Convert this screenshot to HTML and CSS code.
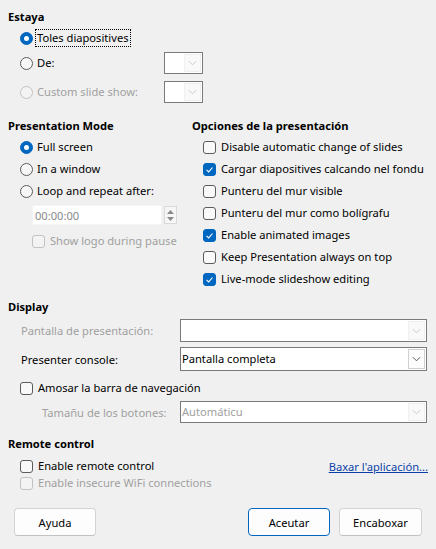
FILE: index.html
```html
<!DOCTYPE html>
<html lang="ast">
<head>
<meta charset="utf-8">
<title>Presentación</title>
<link rel="stylesheet" href="styles.css">
</head>
<body>
<div class="dialog">
  <section class="sec-estaya">
    <h2 class="heading">Estaya</h2>
    <div class="estaya-rows">
      <div class="row r16">
        <span class="radio checked"></span><span class="lbl focus">Toles diapositives</span>
      </div>
      <div class="row r22">
        <span class="radio"></span><span class="lbl wlab">De:</span>
        <span class="combo small"><span class="combo-field"></span><span class="combo-btn dim"><svg viewBox="0 0 10 6" width="9" height="6"><path d="M1 1l4 4 4-4" fill="none" stroke="currentColor" stroke-width="1"/></svg></span></span>
      </div>
      <div class="row r22 disabled">
        <span class="radio"></span><span class="lbl wlab">Custom slide show:</span>
        <span class="combo small"><span class="combo-field"></span><span class="combo-btn dim"><svg viewBox="0 0 10 6" width="9" height="6"><path d="M1 1l4 4 4-4" fill="none" stroke="currentColor" stroke-width="1"/></svg></span></span>
      </div>
    </div>
  </section>

  <div class="two-col">
    <section class="col-left">
      <h2 class="heading">Presentation Mode</h2>
      <div class="list">
        <div class="row r16"><span class="radio checked"></span><span class="lbl">Full screen</span></div>
        <div class="row r16"><span class="radio"></span><span class="lbl">In a window</span></div>
        <div class="row r16"><span class="radio"></span><span class="lbl">Loop and repeat after:</span></div>
        <div class="spin">
          <span class="spin-field">00:00:00</span>
          <span class="spin-btns">
            <svg viewBox="0 0 7 4" width="7" height="4"><path d="M0 4L3.5 0 7 4z" fill="currentColor"/></svg>
            <svg viewBox="0 0 7 4" width="7" height="4"><path d="M0 0L3.5 4 7 0z" fill="currentColor"/></svg>
          </span>
        </div>
        <div class="row r16 disabled logo-row"><span class="check"></span><span class="lbl">Show logo during pause</span></div>
      </div>
    </section>
    <section class="col-right">
      <h2 class="heading">Opciones de la presentación</h2>
      <div class="list">
        <div class="row r16"><span class="check"></span><span class="lbl">Disable automatic change of slides</span></div>
        <div class="row r16"><span class="check checked"><svg viewBox="0 0 13 13" width="13" height="13"><path d="M3.5 6.8l2.2 2.1 3.8-4.4" fill="none" stroke="#fff" stroke-width="1.1"/></svg></span><span class="lbl">Cargar diapositives calcando nel fondu</span></div>
        <div class="row r16"><span class="check"></span><span class="lbl">Punteru del mur visible</span></div>
        <div class="row r16"><span class="check"></span><span class="lbl">Punteru del mur como bolígrafu</span></div>
        <div class="row r16"><span class="check checked"><svg viewBox="0 0 13 13" width="13" height="13"><path d="M3.5 6.8l2.2 2.1 3.8-4.4" fill="none" stroke="#fff" stroke-width="1.1"/></svg></span><span class="lbl">Enable animated images</span></div>
        <div class="row r16"><span class="check"></span><span class="lbl">Keep Presentation always on top</span></div>
        <div class="row r16"><span class="check checked"><svg viewBox="0 0 13 13" width="13" height="13"><path d="M3.5 6.8l2.2 2.1 3.8-4.4" fill="none" stroke="#fff" stroke-width="1.1"/></svg></span><span class="lbl">Live-mode slideshow editing</span></div>
      </div>
    </section>
  </div>

  <section class="sec-display">
    <h2 class="heading">Display</h2>
    <div class="disp-grid">
      <span class="dlabel disabled-text">Pantalla de presentación:</span>
      <span class="combo wide h23"><span class="combo-field"></span><span class="combo-btn dim"><svg viewBox="0 0 10 6" width="9" height="6"><path d="M1 1l4 4 4-4" fill="none" stroke="currentColor" stroke-width="1"/></svg></span></span>
      <span class="dlabel">Presenter console:</span>
      <span class="combo wide h24 enabled"><span class="combo-field">Pantalla completa</span><span class="combo-btn"><svg viewBox="0 0 10 6" width="9" height="6"><path d="M1 1l4 4 4-4" fill="none" stroke="currentColor" stroke-width="1"/></svg></span></span>
    </div>
    <div class="row r16 nav-row"><span class="check"></span><span class="lbl">Amosar la barra de navegación</span></div>
    <div class="disp-grid size-grid">
      <span class="dlabel disabled-text indent">Tamañu de los botones:</span>
      <span class="combo wide h22"><span class="combo-field disabled-text">Automáticu</span><span class="combo-btn dim"><svg viewBox="0 0 10 6" width="9" height="6"><path d="M1 1l4 4 4-4" fill="none" stroke="currentColor" stroke-width="1"/></svg></span></span>
    </div>
  </section>

  <section class="sec-remote">
    <h2 class="heading">Remote control</h2>
    <div class="remote-row">
      <div class="row r16"><span class="check"></span><span class="lbl">Enable remote control</span></div>
      <a class="link" href="#">Baxar l'aplicación...</a>
    </div>
    <div class="row r16 disabled"><span class="check"></span><span class="lbl">Enable insecure WiFi connections</span></div>
  </section>

  <div class="buttons">
    <button class="btn">Ayuda</button>
    <span class="spacer"></span>
    <button class="btn default">Aceutar</button>
    <button class="btn">Encaboxar</button>
  </div>
</div>
</body>
</html>
```

FILE: styles.css
```css
* { box-sizing: border-box; }
html, body { margin: 0; padding: 0; }
body {
  background: #f0f0f0;
  font-family: "Noto Sans", "Open Sans", sans-serif;
  font-size: 11.15px;
  color: #000;
  width: 436px;
  height: 549px;
  overflow: hidden;
}
.dialog {
  padding: 9px 8px 0 8px;
  display: flex;
  flex-direction: column;
}
.heading {
  margin: 0;
  font-size: 11.15px;
  font-weight: bold;
  line-height: 16px;
  height: 16px;
  white-space: nowrap;
}
.row {
  display: flex;
  align-items: center;
  white-space: nowrap;
}
.r16 { height: 16px; }
.r22 { height: 22px; }
.lbl { line-height: 16px; }
.disabled .lbl, .disabled-text { color: #a0a0a0; }

/* radio */
.radio {
  width: 13px;
  height: 13px;
  border-radius: 50%;
  border: 1px solid #5c5c5c;
  background: #f7f7f7;
  flex: none;
  margin-right: 4px;
  position: relative;
}
.radio.checked {
  background: #0067c0;
  border-color: #0067c0;
}
.radio.checked::after {
  content: "";
  position: absolute;
  left: 3px; top: 3px;
  width: 5px; height: 5px;
  border-radius: 50%;
  background: #fff;
}
.disabled .radio, .disabled .check { border-color: #c2c2c2; background: #f3f3f3; }

/* checkbox */
.check {
  width: 13px;
  height: 13px;
  border-radius: 3px;
  border: 1px solid #5c5c5c;
  background: #f9f9f9;
  flex: none;
  margin-right: 5px;
  display: flex;
}
.check.checked { background: #0067c0; border-color: #0067c0; }
.check svg { margin: -1px; }

.focus { outline: 1px dotted #000; outline-offset: 0; padding: 0 1px; margin-left: -1px; }

/* Estaya */
.estaya-rows {
  display: flex;
  flex-direction: column;
  padding-left: 12px;
  margin-top: 5px;
}
.estaya-rows .r16 + .r22 { margin-top: 6px; }
.estaya-rows .r22 + .r22 { margin-top: 7px; }
.wlab { width: 127px; }

/* combo */
.combo {
  display: flex;
  border: 1px solid #7a7a7a;
  background: #fff;
}
.combo.small { width: 39px; height: 22px; }
.combo-field {
  flex: 1;
  display: flex;
  align-items: center;
  padding-left: 1px;
  line-height: 16px;
  white-space: nowrap;
}
.combo-btn {
  width: 17px;
  margin: 1px;
  display: flex;
  align-items: center;
  justify-content: center;
  background: #f9f9f9;
  border: 1px solid #f0f0f0;
  color: #4a4a4a;
}
.combo-btn.dim { color: #c4c4c4; }
.combo.enabled .combo-btn { border-color: #cfcfcf; background: #fdfdfd; }
.combo.wide { width: 247px; }
.h22 { height: 22px; }
.h23 { height: 23px; }
.h24 { height: 24px; }

/* two columns */
.two-col {
  display: grid;
  grid-template-columns: 184px 1fr;
  margin-top: 15px;
}
.list {
  display: flex;
  flex-direction: column;
  gap: 6px;
  padding-left: 12px;
  margin-top: 5px;
}
.col-right .list { padding-left: 11px; }
.spin {
  display: flex;
  align-items: center;
  height: 20px;
  margin-left: 12px;
}
.spin-field {
  width: 130px;
  height: 20px;
  background: #fff;
  color: #8a8a8a;
  line-height: 20px;
  padding-left: 2px;
  border: 1px solid #f4f4f4;
}
.spin-btns {
  display: flex;
  flex-direction: column;
  justify-content: space-around;
  align-items: center;
  width: 13px;
  height: 18px;
  margin-left: 2px;
  border: 1px solid #d9d9d9;
  background: #f6f6f6;
  color: #8a8a8a;
  padding: 1px 0;
}
.logo-row { margin-top: 2px; padding-left: 12px; }

/* display */
.sec-display { margin-top: 12px; }
.disp-grid {
  display: grid;
  grid-template-columns: 172px 247px;
  row-gap: 5px;
  align-items: center;
  margin-top: 4px;
}
.dlabel { padding-left: 13px; white-space: nowrap; }
.dlabel.indent { padding-left: 34px; }
.nav-row { margin-top: 9px; padding-left: 12px; }
.size-grid { margin-top: 5px; }

/* remote */
.sec-remote { margin-top: 13px; }
.remote-row {
  display: flex;
  justify-content: space-between;
  align-items: center;
  margin-top: 6px;
  padding-left: 12px;
  height: 16px;
}
.sec-remote > .row { padding-left: 12px; margin-top: 1px; }
.link { color: #0b3fa8; text-decoration: underline; white-space: nowrap; }

/* buttons */
.buttons {
  display: flex;
  margin-top: 17px;
  padding: 0 6px;
  gap: 9px;
}
.spacer { flex: 1; }
.btn {
  font: inherit;
  color: #000;
  width: 82px;
  height: 28px;
  border: 1px solid #d3d3d3;
  border-bottom-color: #c2c2c2;
  border-radius: 4px;
  background: #fdfdfd;
  padding: 0;
}
.btn.default { border-color: #0067c0; }
.btn:last-child { width: 83px; }
```
